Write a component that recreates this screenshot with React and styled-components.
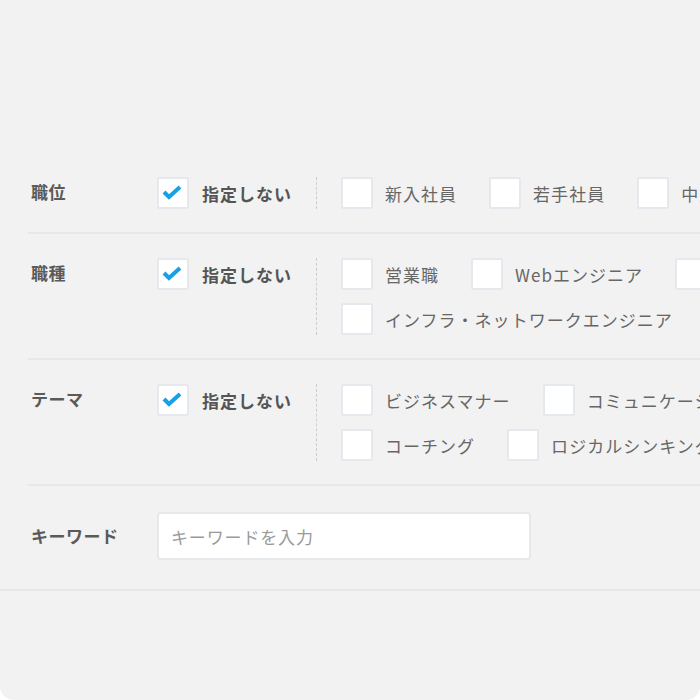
import styled, { createGlobalStyle } from 'styled-components';

const GlobalStyle = createGlobalStyle`
  html, body {
    margin: 0;
    padding: 0;
    background: #ffffff;
  }
  body {
    font-family: "Noto Sans CJK JP", "Noto Sans", sans-serif;
  }
`;

const Card = styled.div`
  width: 700px;
  height: 700px;
  box-sizing: border-box;
  background: #f2f2f2;
  border-radius: 0 0 14px 14px;
  overflow: hidden;
  padding-top: 153px;
`;

const FormSection = styled.div`
  border-bottom: 2px solid #e6e9ec;
`;

const Row = styled.div`
  display: flex;
  align-items: flex-start;
  margin-left: 28px;
  padding: ${({ $padding }) => $padding || '24px 0 23px'};
  border-bottom: ${({ $last }) => ($last ? 'none' : '2px solid #e6e9ec')};
`;

const Label = styled.div`
  flex: 0 0 129px;
  padding-left: 3px;
  box-sizing: border-box;
  font-size: 17px;
  font-weight: 700;
  line-height: ${({ $lh }) => $lh || '30px'};
  color: #5a5a5a;
  letter-spacing: 0.03em;
`;

const NoneOption = styled.label`
  display: flex;
  align-items: center;
  gap: 13px;
  flex: 0 0 159px;
  font-size: 17px;
  font-weight: 700;
  color: #555555;
  letter-spacing: 0.06em;
`;

const Options = styled.div`
  flex: 0 0 540px;
  display: flex;
  flex-wrap: wrap;
  column-gap: 32px;
  row-gap: 13px;
  padding-left: 24px;
  border-left: 1px dashed #cccccc;
`;

const Option = styled.label`
  display: flex;
  align-items: center;
  gap: 12px;
  font-size: 17px;
  color: #666666;
  letter-spacing: 0.06em;
  white-space: nowrap;
`;

const Box = styled.span`
  display: inline-flex;
  align-items: center;
  justify-content: center;
  flex: 0 0 auto;
  width: 32px;
  height: 32px;
  box-sizing: border-box;
  border: 2px solid #e5e9ee;
  border-radius: 2px;
  background: #ffffff;
`;

const KeywordInput = styled.input`
  width: 374px;
  height: 48px;
  box-sizing: border-box;
  border: 2px solid #e6e9ec;
  border-radius: 4px;
  background: #ffffff;
  padding: 0 12px;
  font-family: "Noto Sans CJK JP", "Noto Sans", sans-serif;
  font-size: 17px;
  letter-spacing: 0.05em;
  color: #555555;
  outline: none;

  &::placeholder {
    color: #9a9a9a;
  }
`;

function Checkbox({ checked }) {
  return (
    <Box>
      {checked && (
        <svg width='28' height='28' viewBox='0 0 28 28'>
          <polyline
            points='5,13 10,18 21,8'
            fill='none'
            stroke='#16a0e6'
            strokeWidth='4'
            strokeLinejoin='miter'
          />
        </svg>
      )}
    </Box>
  );
}

const groups = [
  {
    label: '職位',
    options: ['新入社員', '若手社員', '中堅社員'],
  },
  {
    label: '職種',
    options: ['営業職', 'Webエンジニア', 'デザイナー', 'インフラ・ネットワークエンジニア'],
  },
  {
    label: 'テーマ',
    options: ['ビジネスマナー', 'コミュニケーション', 'コーチング', 'ロジカルシンキング'],
  },
];

export default function App() {
  return (
    <>
      <GlobalStyle />
      <Card>
        <FormSection>
          {groups.map((g) => (
            <Row key={g.label}>
              <Label>{g.label}</Label>
              <NoneOption>
                <Checkbox checked />
                指定しない
              </NoneOption>
              <Options>
                {g.options.map((o) => (
                  <Option key={o}>
                    <Checkbox />
                    {o}
                  </Option>
                ))}
              </Options>
            </Row>
          ))}
          <Row $last $padding='26px 0 29px'>
            <Label $lh='48px'>キーワード</Label>
            <KeywordInput placeholder='キーワードを入力' />
          </Row>
        </FormSection>
      </Card>
    </>
  );
}
